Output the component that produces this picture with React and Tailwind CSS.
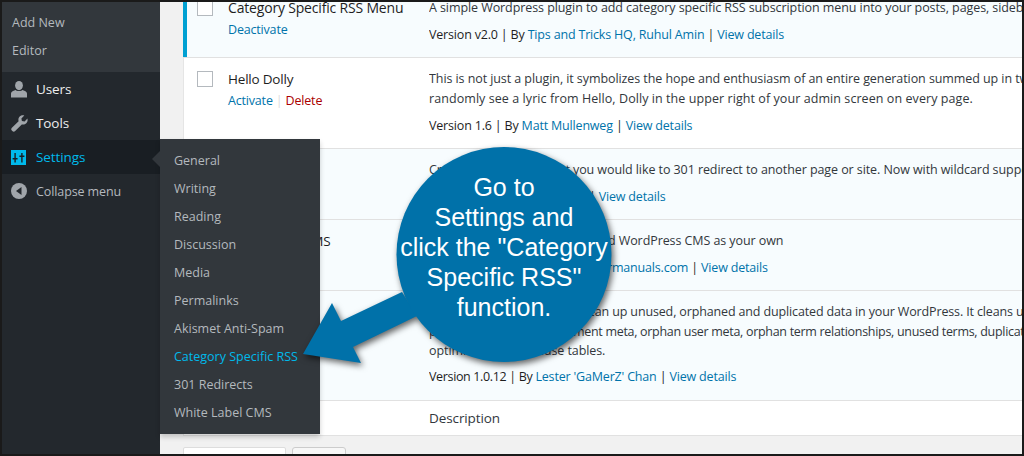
const font = { fontFamily: '"Open Sans", "Noto Sans", sans-serif' };

function Cb() {
  return <span className="block w-4 h-4 border border-[#b4b9be] bg-white shrink-0" />;
}

function Row({ active, title, titleCls = "text-[13.5px] tracking-[-0.2px]", actions, children, style }) {
  return (
    <div
      className={`flex border-b border-[#e1e1e1] pb-[12px] ${active ? "bg-[#f7fcfe]" : "bg-white shadow-[inset_1px_0_0_#e5e5e5]"}`}
      style={style}
    >
      <div className="w-[45px] pl-[14px] pt-[13px] shrink-0"><Cb /></div>
      <div className="w-[201px] shrink-0 pt-[11px]">
        <div className={`${titleCls} leading-5 text-[#1e1e1e] whitespace-nowrap`}>{title}</div>
        <div className="mt-[2px] leading-5 whitespace-nowrap">{actions}</div>
      </div>
      <div className="flex-1 min-w-0 pt-[11px] text-[#32373c] tracking-[-0.08px] leading-5 whitespace-nowrap overflow-hidden">{children}</div>
    </div>
  );
}

const A = ({ children, className = "" }) => <span className={`text-[#0073aa] ${className}`}>{children}</span>;

function Version({ children }) {
  return <div className="mt-[7px] text-[#1e1e1e] tracking-[-0.18px] leading-5">{children}</div>;
}

const UserIcon = () => (
  <svg width="16" height="17" viewBox="0 0 16 17" className="text-[#a0a5aa]" fill="currentColor">
    <ellipse cx="8" cy="4.6" rx="3.9" ry="4.6" />
    <path d="M0 16.5V12.6c0-1.6 1.6-2.9 4.6-3.6 1 1.3 5.8 1.3 6.8 0 3 .7 4.6 2 4.6 3.6v3.9z" />
  </svg>
);
const WrenchIcon = () => (
  <svg width="17" height="17" viewBox="0 0 17 17" className="text-[#a0a5aa]" fill="currentColor">
    <path d="M16.4 3.6c.5 1.7.1 3.5-1.1 4.7-1.2 1.2-2.9 1.6-4.5 1.1L4.2 16a2 2 0 0 1-2.9 0l-.4-.4a2 2 0 0 1 0-2.8l6.7-6.6c-.5-1.6-.1-3.4 1.1-4.6C9.9.4 11.7 0 13.3.5L10.4 3.4l.5 2.7 2.7.5z" />
  </svg>
);
const SettingsIcon = () => (
  <svg width="15" height="15" viewBox="0 0 15 15">
    <rect width="15" height="15" fill="#00b9eb" />
    <path d="M3.4 3h1.4v9.5H3.4zM1.6 8h5v1.6h-5zM10.2 3h1.4v9.5h-1.4zM8.4 5.4h5V7h-5z" fill="#191e23" />
  </svg>
);
const CollapseIcon = () => (
  <svg width="16" height="16" viewBox="0 0 16 16">
    <circle cx="8" cy="8" r="8" fill="#a0a5aa" />
    <path d="M10.5 4v8L5 8z" fill="#23282d" />
  </svg>
);

function MenuRow({ icon, children, cls = "text-[#eee]" }) {
  return (
    <div className={`flex items-center h-[34px] ${cls}`}>
      <span className="w-[34px] pl-[9px] shrink-0 flex">{icon}</span>
      <span className="text-[13.5px] tracking-[-0.1px]">{children}</span>
    </div>
  );
}

const subItems = ["General","Writing","Reading","Discussion","Media","Permalinks","Akismet Anti-Spam","Category Specific RSS","301 Redirects","White Label CMS"];

export default function App() {
  return (
    <div className="relative w-[1024px] h-[456px] overflow-hidden bg-[#1a1a1a] p-[2px] text-[12.5px] tracking-[-0.18px]" style={font}>
      <div className="relative flex h-full bg-[#f1f1f1] overflow-hidden">
        {/* Sidebar */}
        <div className="w-[158px] shrink-0 bg-[#23282d]">
          <div className="bg-[#32373c] h-[70px] pl-[10px] pt-[7px] text-[#b4b9be] tracking-normal">
            <div className="h-[28px] flex items-center">Add New</div>
            <div className="h-[28px] flex items-center">Editor</div>
          </div>
          <MenuRow icon={<UserIcon />}>Users</MenuRow>
          <MenuRow icon={<WrenchIcon />}>Tools</MenuRow>
          <div className="bg-[#191e23]">
            <MenuRow icon={<SettingsIcon />} cls="text-[#00b9eb]">Settings</MenuRow>
          </div>
          <MenuRow icon={<CollapseIcon />} cls="text-[#b4b9be]"><span className="text-[12.5px]">Collapse menu</span></MenuRow>
        </div>

        {/* Content */}
        <div className="flex-1 min-w-0 pl-[23px] flex flex-col">
          <div className="-mt-[15px] shrink-0">
            <Row active titleCls="text-[14px] font-medium" style={{ boxShadow: "inset 4px 0 0 #00a0d2" }} title="Category Specific RSS Menu" actions={<A>Deactivate</A>}>
              A simple Wordpress plugin to add category specific RSS subscription menu into your posts, pages, sidebars and more
              <Version>Version v2.0 | By <A>Tips and Tricks HQ, Ruhul Amin</A> | <A>View details</A></Version>
            </Row>
            <Row title="Hello Dolly" actions={<><A>Activate</A> <span className="text-[#ddd]">|</span> <span className="text-[#a00]">Delete</span></>}>
              This is not just a plugin, it symbolizes the hope and enthusiasm of an entire generation summed up in two words
              <div className="tracking-[0.07px]">randomly see a lyric from Hello, Dolly in the upper right of your admin screen on every page.</div>
              <Version>Version 1.6 | By <A>Matt Mullenweg</A> | <A>View details</A></Version>
            </Row>
            <Row active title="301 Redirects">
              Create a list of URLs that you would like to 301 redirect to another page or site. Now with wildcard support
              <Version>Version 2.40 | By <A className="ml-[-3px]">Scott Nelle</A> | <A>View details</A></Version>
            </Row>
            <Row active title="White Label CMS">
              Lets you brand a dashboard and WordPress CMS as your own
              <Version>Version 2.0 | By <A className="ml-[3px]">www.videousermanuals.com</A> | <A>View details</A></Version>
            </Row>
            <Row active title="WP-Optimize">
              <div className="tracking-[-0.14px]">WP-Optimize helps you to clean up unused, orphaned and duplicated data in your WordPress. It cleans up</div>
              <div className="tracking-[-0.3px]">post meta, orphaned comment meta, orphan user meta, orphan term relationships, unused terms, duplicate</div>
              <div className="-mt-[1px] -mb-[1px]">optimize your database tables.</div>
              <Version><span className="tracking-[-0.35px]">Version 1.0.12 | By</span> <A>Lester 'GaMerZ' Chan</A> | <A>View details</A></Version>
              <div className="h-[1px]" />
            </Row>
            <div className="flex bg-white h-[35px] items-center pt-[1px] border-b border-[#e1e1e1] shadow-[inset_1px_0_0_#e5e5e5] pl-[246px] text-[13.5px] tracking-[-0.1px] text-[#32373c]">Description</div>
          </div>
          <div className="flex gap-[6px] mt-[11px] shrink-0">
            <div className="w-[103px] h-[28px] bg-white border border-[#ddd] rounded-[2px]" />
            <div className="w-[54px] h-[28px] bg-[#f7f7f7] border border-[#ccc] rounded-[3px]" />
          </div>
        </div>

        {/* Flyout submenu */}
        <div className="absolute left-[158px] top-[137px] w-[160px] h-[295px] bg-[#32373c] pt-[8px] tracking-normal shadow-[0_3px_5px_rgba(0,0,0,0.2)]">
          <div className="absolute -left-[8px] top-[12px] w-0 h-0 border-y-[8px] border-y-transparent border-r-[8px] border-r-[#32373c]" />
          {subItems.map((s) => (
            <div key={s} className={`h-[28px] pl-[14px] flex items-center ${s === "Category Specific RSS" ? "text-[#00b9eb]" : "text-[#b4b9be]"}`}>{s}</div>
          ))}
        </div>
      </div>

      {/* Callout */}
      <div className="absolute left-0 top-0 w-[1024px] h-[456px] pointer-events-none">
        <svg width="1024" height="456" viewBox="0 0 1024 456" className="absolute left-0 top-0" style={{ filter: "drop-shadow(2px 3px 3px rgba(0,0,0,0.6))" }}>
          <path d="M303 354 L332 303 L341 321 L402 292 L417 316 L353 347 L361 363 Z" fill="#0071a9" />
          <circle cx="504" cy="254.5" r="107.5" fill="#0071a9" />
        </svg>
        <div className="absolute left-[384px] top-[172px] w-[240px] text-center text-white text-[25px] tracking-normal leading-[30px]" style={{ fontFamily: '"Liberation Sans", Arial, sans-serif' }}>
          <div>Go to</div>
          <div>Settings and</div>
          <div className="whitespace-nowrap">click the "Category</div>
          <div>Specific RSS"</div>
          <div>function.</div>
        </div>
      </div>
    </div>
  );
}
